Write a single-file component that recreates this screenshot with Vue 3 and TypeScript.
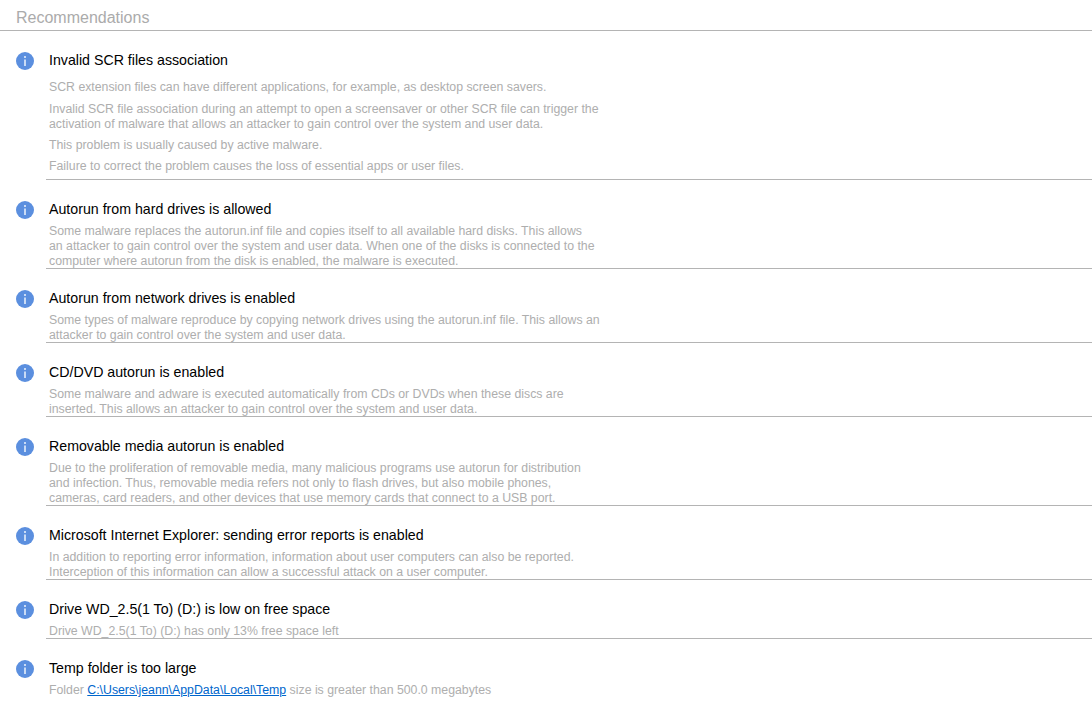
<script setup lang="ts">
interface Part { text: string; href?: boolean }
interface Rec { title: string; paragraphs?: string[]; lines?: string[]; parts?: Part[] }

const recs: Rec[] = [
  {
    title: 'Invalid SCR files association',
    paragraphs: [
      'SCR extension files can have different applications, for example, as desktop screen savers.',
      'Invalid SCR file association during an attempt to open a screensaver or other SCR file can trigger the activation of malware that allows an attacker to gain control over the system and user data.',
      'This problem is usually caused by active malware.',
      'Failure to correct the problem causes the loss of essential apps or user files.',
    ],
  },
  {
    title: 'Autorun from hard drives is allowed',
    lines: ['Some malware replaces the autorun.inf file and copies itself to all available hard disks. This allows an\u00a0attacker to gain control over the system and user data. When one of the disks is connected to the computer where autorun from the disk is enabled, the malware is executed.'],
  },
  {
    title: 'Autorun from network drives is enabled',
    lines: ['Some types of malware reproduce by copying network drives using the autorun.inf file. This allows an attacker to gain control over the system and user data.'],
  },
  {
    title: 'CD/DVD autorun is enabled',
    lines: ['Some malware and adware is executed automatically from CDs or DVDs when these discs are inserted. This allows an attacker to gain control over the system and user data.'],
  },
  {
    title: 'Removable media autorun is enabled',
    lines: ['Due to the proliferation of removable media, many malicious programs use autorun for distribution and infection. Thus, removable media refers not only to flash drives, but also mobile phones, cameras, card readers, and other devices that use memory cards that connect to a USB port.'],
  },
  {
    title: 'Microsoft Internet Explorer: sending error reports is enabled',
    lines: ['In addition to reporting error information, information about user computers can also be reported. Interception of this information can allow a successful attack on a user computer.'],
  },
  {
    title: 'Drive WD_2.5(1 To) (D:) is low on free space',
    lines: ['Drive WD_2.5(1 To) (D:) has only 13% free space left'],
  },
  {
    title: 'Temp folder is too large',
    parts: [
      { text: 'Folder ' },
      { text: 'C:\\Users\\jeann\\AppData\\Local\\Temp', href: true },
      { text: ' size is greater than 500.0 megabytes' },
    ],
  },
]
</script>

<template>
  <main class="page">
    <h1 class="heading">Recommendations</h1>
    <section v-for="rec in recs" :key="rec.title" class="rec">
      <svg class="icon" viewBox="0 0 18 18" aria-hidden="true">
        <circle cx="9" cy="9" r="9" fill="#5b8fdf" />
        <rect x="8" y="4" width="2" height="2" fill="#c9dbf5" />
        <rect x="8" y="7.5" width="2" height="6.5" fill="#c9dbf5" />
      </svg>
      <div class="body">
        <h2 class="title">{{ rec.title }}</h2>
        <template v-if="rec.paragraphs">
          <p v-for="p in rec.paragraphs" :key="p" class="para">{{ p }}</p>
        </template>
        <p v-for="l in rec.lines" :key="l" class="desc">{{ l }}</p>
        <p v-if="rec.parts" class="desc">
          <template v-for="part in rec.parts" :key="part.text">
            <a v-if="part.href" class="link" href="#">{{ part.text }}</a>
            <template v-else>{{ part.text }}</template>
          </template>
        </p>
      </div>
    </section>
  </main>
</template>

<style scoped>
.page {
  font-family: "Liberation Sans", Arial, sans-serif;
  background: #fff;
  height: 707px;
  overflow: hidden;
}
.heading {
  margin: 0;
  padding: 8px 0 3px 16px;
  height: 19px;
  line-height: 19px;
  font-size: 16px;
  font-weight: 400;
  color: #ababab;
  border-bottom: 1px solid #b4b4b4;
}
.rec {
  display: grid;
  grid-template-columns: 46px 1fr;
}
.icon {
  width: 18px;
  height: 18px;
  margin: 21px 0 0 16px;
}
.body {
  padding: 21px 0 0 3px;
  border-bottom: 1px solid #b4b4b4;
}
.rec:last-child .body {
  border-bottom: 0;
}
.title {
  margin: 0 0 6px;
  font-size: 14.2px;
  line-height: 17px;
  font-weight: 400;
  color: #000;
}
.para {
  margin: 6px 0 0;
  width: 552px;
  font-size: 12.3px;
  line-height: 15px;
  color: #aeaeae;
}
.para:first-of-type {
  margin-top: 11px;
}
.para:nth-of-type(2) {
  margin-top: 7px;
}
.para:last-of-type {
  margin-bottom: 5px;
}
.desc {
  margin: 0 0 -1px;
  width: 552px;
  font-size: 12.3px;
  line-height: 15px;
  color: #aeaeae;
}
.link {
  color: #0066cc;
  text-decoration: underline;
}
</style>
